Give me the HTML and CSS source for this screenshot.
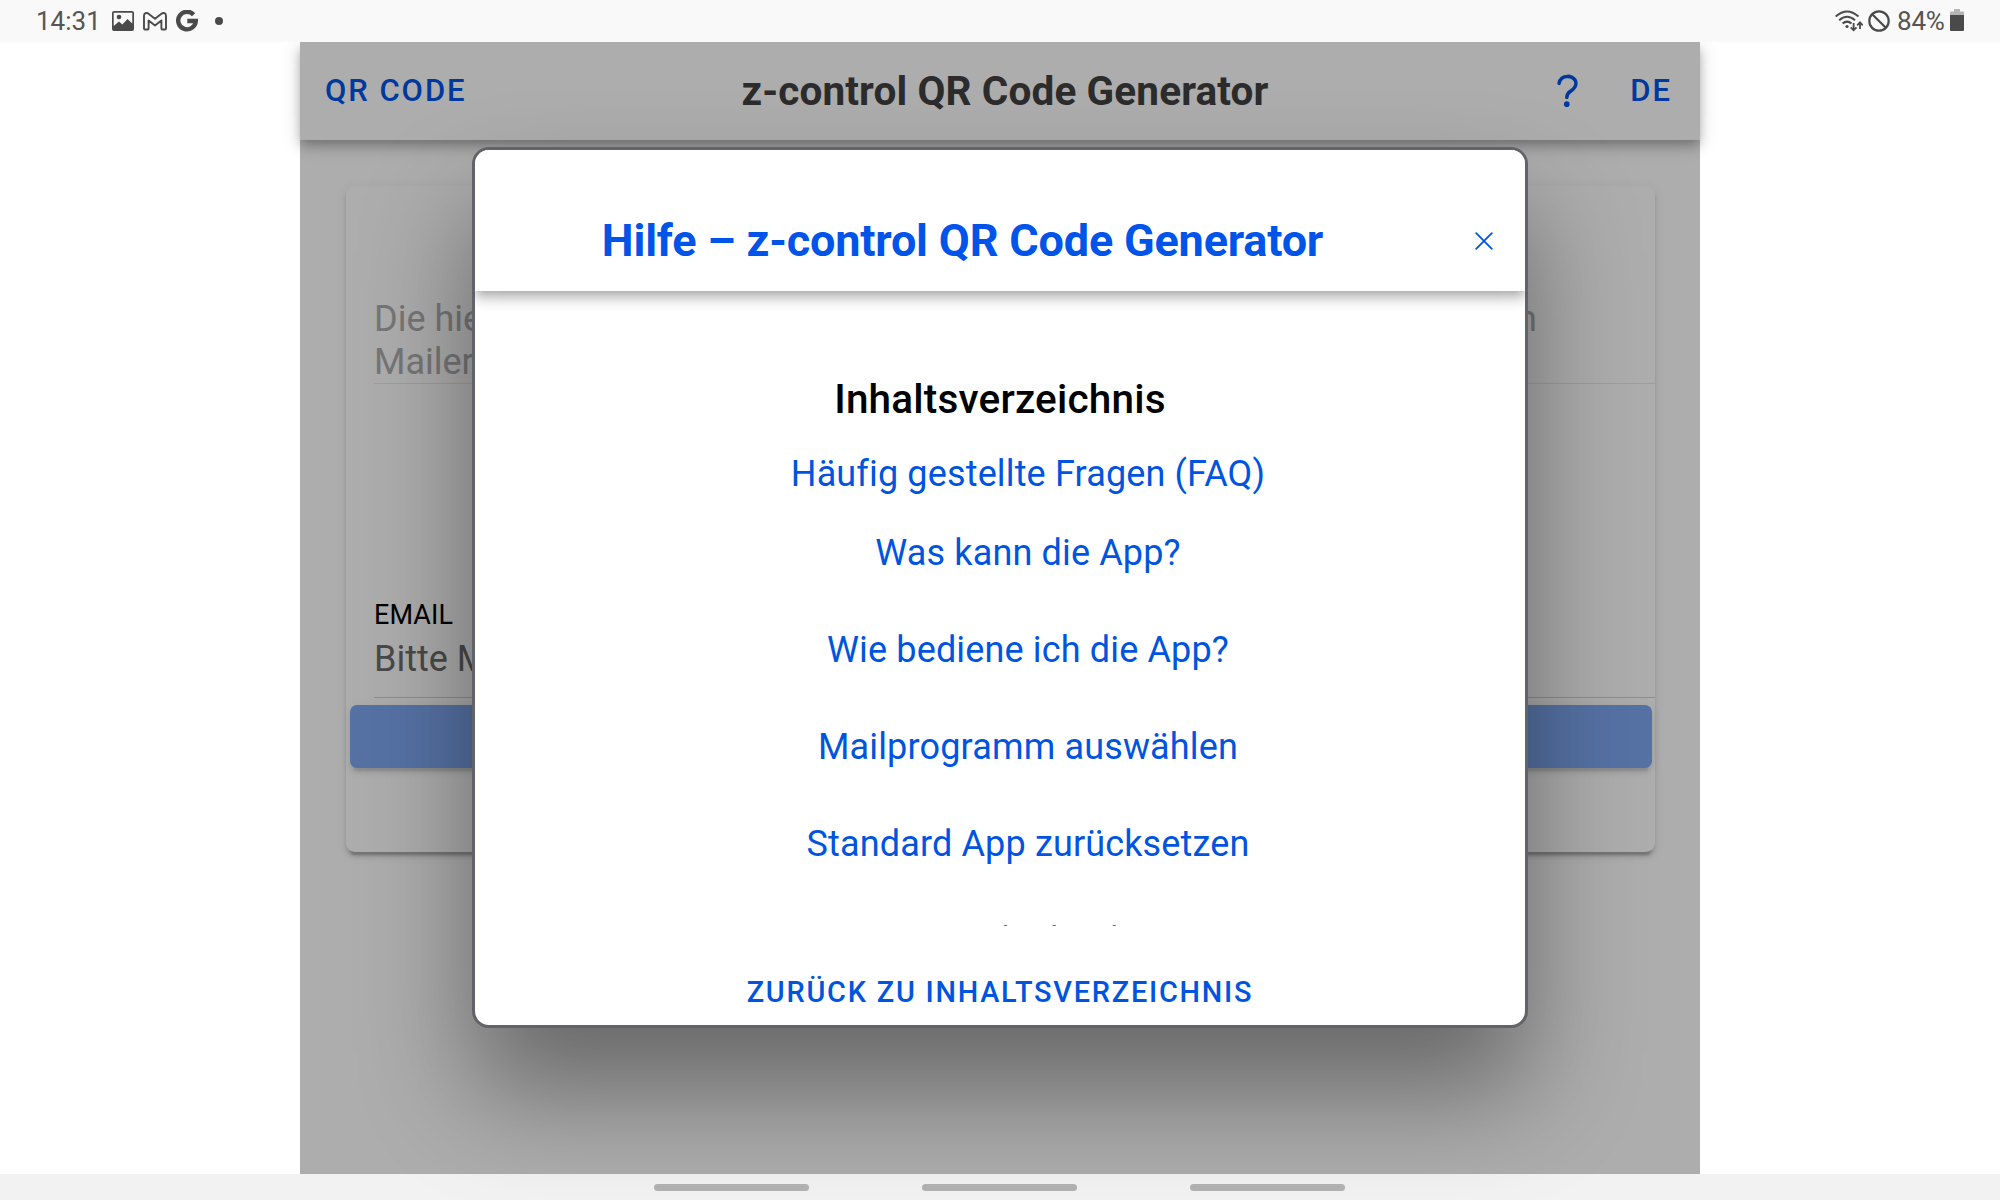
FILE: index.html
```html
<!DOCTYPE html>
<html lang="de">
<head>
<meta charset="utf-8">
<title>z-control QR Code Generator</title>
<link rel="stylesheet" href="styles.css">
</head>
<body>
<div class="status-bar">
  <div class="status-group">
    <span class="status-time">14:31</span>
    <svg class="icon-picture" width="22" height="20" viewBox="0 0 22 20"><path fill="#4a4a4a" fill-rule="evenodd" d="M2 0h18a2 2 0 0 1 2 2v16a2 2 0 0 1-2 2H2a2 2 0 0 1-2-2V2a2 2 0 0 1 2-2zM1.700 1.700v13.300l5.300-4.500 3.300 3 5.200-5.500 4.800 4.500V1.700z"/><circle cx="7" cy="6" r="2.300" fill="#4a4a4a"/></svg>
    <svg class="icon-mail" width="24" height="19" viewBox="0 0 24 19"><path fill="none" stroke="#4a4a4a" stroke-width="1.900" stroke-linejoin="round" d="M1 3.800C1 1 3.500.3 5.200 1.600L12 6.800l6.800-5.200C20.500.3 23 1 23 3.800V16.500a1 1 0 0 1-1 1h-2.600a1 1 0 0 1-1-1V8.500L12 13.400 5.600 8.500v8a1 1 0 0 1-1 1H2a1 1 0 0 1-1-1z"/></svg>
    <svg class="icon-g" width="22" height="22" viewBox="0 0 22 22"><path fill="none" stroke="#4a4a4a" stroke-width="4.400" d="M17.600 4.700A8.800 8.800 0 1 0 19.800 11H11.300"/></svg>
    <span class="status-dot"></span>
  </div>
  <div class="status-group status-right">
    <svg width="28" height="22" viewBox="0 0 28 22"><g fill="none" stroke="#4a4a4a" stroke-width="2"><path d="M.7 6.500Q12 -3.500 23.500 6.500M4.200 10.200Q12 3.300 20 10.200M7.600 13.600Q12 9.600 16.500 13.600"/><path stroke-width="1.800" d="M18.600 13v7M15.700 17.300l2.900 3 2.900-3M25 19v-6.500M22.200 15.300l2.800-3 2.800 3"/></g><circle cx="12" cy="16.500" r="1.600" fill="#4a4a4a"/></svg>
    <svg class="icon-block" width="22" height="22" viewBox="0 0 22 22"><g fill="none" stroke="#4a4a4a" stroke-width="2.200"><circle cx="11" cy="11" r="9.700"/><path d="M4.200 4.200l13.600 13.600"/></g></svg>
    <span class="status-battery">84%</span>
    <svg class="icon-battery" width="14" height="22" viewBox="0 0 14 22"><path fill="#b4b4b4" d="M4 0h6v2.500h3a1 1 0 0 1 1 1V7H0V3.500a1 1 0 0 1 1-1h3z"/><path fill="#4a4a4a" d="M0 6h14v15a1 1 0 0 1-1 1H1a1 1 0 0 1-1-1z"/></svg>
  </div>
</div>

<main class="app">
  <header class="toolbar">
    <span class="tool-button">QR CODE</span>
    <h1 class="app-title">z-control QR Code Generator</h1>
    <div class="tool-end">
      <svg width="45" height="45" viewBox="0 0 512 512"><path fill="none" stroke="#0054e9" stroke-linecap="round" stroke-miterlimit="10" stroke-width="40" d="M160 164s1.440-33 33.540-59.460C212.600 88.830 235.490 84.280 256 84c18.730-.23 35.470 2.940 45.480 7.820C318.590 100.200 352 120.600 352 164c0 45.670-29.180 66.370-62.350 89.180S248 298.360 248 324"/><circle cx="248" cy="399.990" r="32" fill="#0054e9"/></svg>
      <span class="tool-button">DE</span>
    </div>
  </header>

  <section class="card">
    <div class="note">
      <div class="note-line"><span>Die hier</span><span>n</span></div>
      <div class="note-line">Mailer</div>
    </div>
    <div class="email-field">
      <div class="email-label">EMAIL</div>
      <div class="email-value">Bitte M</div>
    </div>
    <div class="card-button"></div>
  </section>

  <div class="backdrop">
    <div class="modal">
      <div class="modal-header">
        <h2 class="modal-title">Hilfe – z-control QR Code Generator</h2>
        <svg class="modal-close" width="18" height="18" viewBox="0 0 18 18"><path fill="none" stroke="#0054e0" stroke-width="1.800" stroke-linecap="round" d="M1.200 1.200l15.600 15.600M16.800 1.200L1.200 16.800"/></svg>
      </div>
      <div class="modal-content">
        <h3 class="toc-title">Inhaltsverzeichnis</h3>
        <div class="toc">
          <a class="toc-first">Häufig gestellte Fragen (FAQ)</a>
          <a class="toc-link">Was kann die App?</a>
          <a class="toc-link">Wie bediene ich die App?</a>
          <a class="toc-link">Mailprogramm auswählen</a>
          <a class="toc-link">Standard App zurücksetzen</a>
          <a class="toc-link">QR Code drucken</a>
        </div>
      </div>
      <div class="modal-footer">ZURÜCK ZU INHALTSVERZEICHNIS</div>
    </div>
  </div>
</main>

<div class="nav-bar"><span class="nav-pill"></span><span class="nav-pill"></span><span class="nav-pill"></span></div>
</body>
</html>
```
FILE: styles.css
```css
* { box-sizing: border-box; }

body {
  margin: 0;
  width: 2000px;
  height: 1200px;
  overflow: hidden;
  display: flex;
  flex-direction: column;
  align-items: center;
  background: #fff;
  font-family: Roboto, "Liberation Sans", sans-serif;
  font-size: 36px;
}

h1, h2, h3 { margin: 0; }

.status-bar {
  position: relative;
  z-index: 3;
  width: 100%;
  height: 42px;
  padding: 0 36px 0 36px;
  display: flex;
  justify-content: space-between;
  background: #f9f9f9;
  color: #555;
  font-size: 26px;
  line-height: 45px;
}

.status-group { display: flex; align-items: center; }
.status-time { width: 76px; padding-top: 1px; }
.icon-mail { margin-left: 9px; }
.icon-g { margin-left: 9px; }
.status-dot { width: 8px; height: 8px; margin-left: 17px; border-radius: 50%; background: #4a4a4a; }
.icon-block { margin-left: 5px; }
.status-battery { width: 53px; margin-left: 7px; padding-top: 1px; letter-spacing: -0.2px; }
.icon-battery { margin-bottom: 2px; }

.app {
  position: relative;
  width: 1400px;
  height: 1132px;
  background: #fff;
}

.toolbar {
  position: relative;
  height: 98px;
  padding: 0 28px 0 25px;
  display: flex;
  align-items: center;
  background: #fff;
  box-shadow: 0 4.5px 9px -2.25px rgba(0,0,0,.2), 0 9px 11px rgba(0,0,0,.14), 0 2px 22px rgba(0,0,0,.12);
}

.tool-button {
  padding-bottom: 2px;
  color: #0054e9;
  font-size: 31px;
  font-weight: 500;
  letter-spacing: 1.95px;
}

.app-title {
  flex: 1;
  padding-right: 2px;
  text-align: center;
  color: #424242;
  font-size: 40.5px;
  font-weight: 700;
  letter-spacing: 0.13px;
}

.tool-end { display: flex; align-items: center; gap: 40px; }

.card {
  width: 1309px;
  height: 666px;
  margin: 46px 0 0 46px;
  padding-top: 112px;
  border-radius: 9px;
  background: #fff;
  box-shadow: 0 6.75px 2.25px -4.5px rgba(0,0,0,.2), 0 4.5px 4.5px rgba(0,0,0,.12), 0 2.25px 11.25px rgba(0,0,0,.08);
}

.note {
  height: 86px;
  margin-left: 28px;
  border-bottom: 1px solid #ebebeb;
  color: #aeaeae;
  line-height: 43px;
}

.note-line { display: flex; justify-content: space-between; padding-right: 118px; }

.email-field {
  height: 314px;
  margin-left: 28px;
  padding-top: 214px;
  border-bottom: 1px solid #d0d0d0;
}

.email-label { color: #000; font-size: 27px; line-height: 34px; letter-spacing: 0.1px; }
.email-value { color: #6c6c6c; line-height: 54px; }

.card-button {
  height: 63px;
  margin: 7px 3px 0 4px;
  border-radius: 7px;
  background: #7fa9f4;
  box-shadow: 0 6.75px 2.25px -4.5px rgba(0,0,0,.1), 0 4.5px 4.5px rgba(0,0,0,.07), 0 2.25px 11.25px rgba(0,0,0,.06);
}

.backdrop {
  position: absolute;
  inset: 0;
  padding-top: 105px;
  display: flex;
  justify-content: center;
  align-items: flex-start;
  background: rgba(0,0,0,.32);
}

.modal {
  width: 1056px;
  height: 881px;
  display: flex;
  flex-direction: column;
  overflow: hidden;
  border: 3px solid #626368;
  border-radius: 17px;
  background: #fff;
  box-shadow: 0 63px 108px rgba(0,0,0,.4);
}

.modal-header {
  position: relative;
  z-index: 1;
  height: 141px;
  padding: 40px 32px 0 0;
  display: flex;
  align-items: center;
  background: #fff;
  box-shadow: 0 4.5px 9px -2.25px rgba(0,0,0,.2), 0 9px 11px rgba(0,0,0,.14), 0 2px 22px rgba(0,0,0,.12);
}

.modal-title {
  flex: 1;
  margin-right: 25px;
  text-align: center;
  color: #0054e9;
  font-size: 45px;
  font-weight: 700;
  letter-spacing: -0.19px;
}
.modal-close { margin-bottom: 0; }

.modal-content { height: 635px; padding-top: 84px; overflow: hidden; text-align: center; }
.toc-title { color: #000; font-size: 40.5px; font-weight: 500; line-height: 48px; letter-spacing: 0.18px; }
.toc { display: flex; flex-direction: column; margin: 20px 0 0 56px; color: #0054e0; letter-spacing: 0.15px; }
.toc-first { line-height: 62px; }
.toc-link { line-height: 97px; }

.modal-footer {
  height: 99px;
  padding-top: 36px;
  text-align: center;
  color: #0054e0;
  font-size: 28.9px;
  font-weight: 500;
  line-height: 60px;
  letter-spacing: 1.76px;
}

.nav-bar {
  width: 100%;
  height: 26px;
  padding-right: 2px;
  display: flex;
  justify-content: center;
  align-items: center;
  gap: 113px;
  background: #f2f2f2;
}

.nav-pill { width: 155px; height: 7px; border-radius: 4px; background: #b3b3b3; }
```
